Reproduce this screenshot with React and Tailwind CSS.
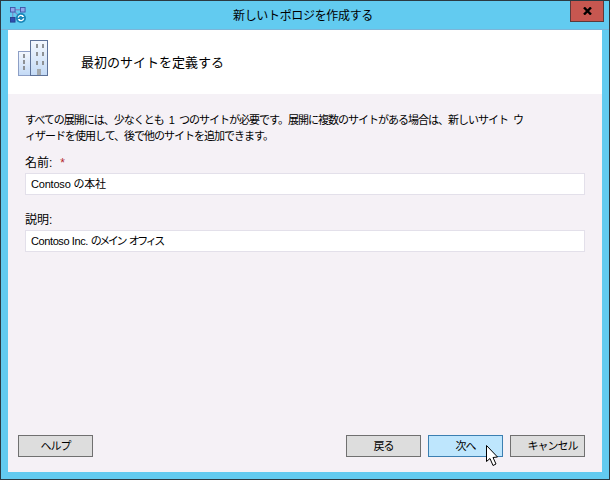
const jp = "font-['Liberation_Sans','Noto_Sans_CJK_JP',sans-serif]";

function AppIcon() {
  return (
    <svg width="16" height="16" viewBox="0 0 17.5 17.5" className="block">
      <path d="M3 3 L3 14 M3 3 L14 3 M3 3 L13 13" stroke="#7d8fc9" strokeWidth="1.4" fill="none" />
      <rect x="0.5" y="0.5" width="5" height="5" fill="#8fa6ea" stroke="#3f55a8" />
      <rect x="11.5" y="0.5" width="5" height="5" fill="#8fa6ea" stroke="#3f55a8" />
      <rect x="0.5" y="11.5" width="5" height="5" fill="#2f4fb0" stroke="#26408f" />
      <circle cx="12" cy="12" r="5.5" fill="#1786b8" />
      <path d="M9 11.5 A3 3 0 0 1 14.5 10.5 M15 12.5 A3 3 0 0 1 9.5 13.5" stroke="#fff" strokeWidth="1.4" fill="none" />
      <path d="M13.5 8.5 L15.5 11 L12.8 11 Z M10.5 15.5 L8.5 13 L11.2 13 Z" fill="#fff" />
    </svg>
  );
}

function BuildingIcon() {
  const windows = [
    [18, 4], [24, 4], [18, 12], [24, 12], [18, 21], [24, 21],
    [5, 14], [5, 20], [5, 26],
  ];
  return (
    <svg width="31" height="37" viewBox="0 0 31 37" className="block">
      <defs>
        <linearGradient id="tower" x1="0" y1="0" x2="0" y2="1">
          <stop offset="0" stopColor="#f4f8fe" />
          <stop offset="1" stopColor="#c3daf6" />
        </linearGradient>
      </defs>
      <rect x="0.5" y="11.5" width="12" height="24" fill="url(#tower)" stroke="#8d9fc6" />
      <rect x="12.5" y="0.5" width="17" height="35" fill="url(#tower)" stroke="#5d7299" />
      {windows.map(([x, y]) => (
        <rect key={`${x}-${y}`} x={x} y={y} width="2" height="4" fill="#8e9296" />
      ))}
      <rect x="19" y="29" width="4" height="6" fill="#a4a9ad" />
    </svg>
  );
}

function CursorIcon() {
  return (
    <svg width="13" height="22" viewBox="0 0 13 22" className="block">
      <path d="M0.5 0.5 L0.5 16.5 L4 13.5 L7 20.5 L10 19 L7 12.5 L11.5 12 Z" fill="#fff" stroke="#000" />
    </svg>
  );
}

function Field({ label, required, children }) {
  return (
    <div className="flex flex-col">
      <div className="flex h-[21px] items-center gap-[8px] text-[12px] text-black">
        <span>{label}</span>
        {required && <span className="text-[#b3272d]">*</span>}
      </div>
      <div className="flex h-[22px] items-center whitespace-pre border border-[#e3e0ea] bg-white px-[5px] text-[11px] text-black">
        {children}
      </div>
    </div>
  );
}

function Btn({ children, active, cursor, className = "" }) {
  return (
    <div
      className={`relative flex h-[22px] w-[75px] items-center justify-center border text-[11px] tracking-[-1px] text-black ${
        active ? "border-[#3c7fb1] bg-[#bee6fd]" : "border-[#707070] bg-[#dddddd]"
      } ${className}`}
    >
      {children}
      {cursor && (
        <div className="absolute left-[57px] top-[9px]">
          <CursorIcon />
        </div>
      )}
    </div>
  );
}

export default function App() {
  return (
    <div className={`flex h-[480px] w-[610px] flex-col border border-[#2b3a42] bg-[#62cbf0] ${jp}`}>
      <div className="relative flex h-[29px] shrink-0 items-center justify-center border-b border-[#7cb5d8] pr-[4px] pt-[2px] text-[12px] tracking-[-0.33px] text-black">
        <div className="absolute left-[9px] top-[6px]">
          <AppIcon />
        </div>
        <span>新しいトポロジを作成する</span>
        <div className="absolute right-[5px] top-0 flex h-[21px] w-[34px] items-center justify-center border border-t-0 border-[#5b3a3c] bg-[#c75750]">
          <svg width="9" height="8" viewBox="0 0 9 8">
            <path d="M1 0.5 L8 7.5 M8 0.5 L1 7.5" stroke="#000" strokeWidth="2.4" />
          </svg>
        </div>
      </div>

      <div className="mx-[7px] mb-[7px] flex min-h-0 flex-1 flex-col bg-[#f5f1f6]">
        <div className="flex h-[64px] shrink-0 items-center gap-[32px] bg-white pl-[10px]">
          <div className="mb-[8px]">
            <BuildingIcon />
          </div>
          <span className="pt-[2px] text-[13px] text-black">最初のサイトを定義する</span>
        </div>

        <div className="flex flex-1 flex-col px-[17px] pb-[15px] pt-[18px]">
          <p className="whitespace-nowrap text-[11px] leading-[16px] tracking-[-1px] text-black [word-spacing:3px]">
            すべての展開には、少なくとも 1 つのサイトが必要です。展開に複数のサイトがある場合は、新しいサイト ウ
            <br />
            ィザードを使用して、後で他のサイトを追加できます。
          </p>
          <div className="mt-[8px] flex flex-col gap-[14px]">
            <Field label="名前:" required>
              <span className="tracking-[-0.2px]">Contoso の本社</span>
            </Field>
            <Field label="説明:">
              <span className="tracking-[-0.4px]">Contoso Inc. </span>
              <span className="tracking-[-2.4px] [word-spacing:3px]">のメイン オフィス</span>
            </Field>
          </div>
          <div className="-ml-[7px] mt-auto flex items-center justify-between">
            <Btn>ヘルプ</Btn>
            <div className="flex gap-[7px]">
              <Btn>戻る</Btn>
              <Btn active cursor>次へ</Btn>
              <Btn className="pl-[10px]">キャンセル</Btn>
            </div>
          </div>
        </div>
      </div>
    </div>
  );
}
